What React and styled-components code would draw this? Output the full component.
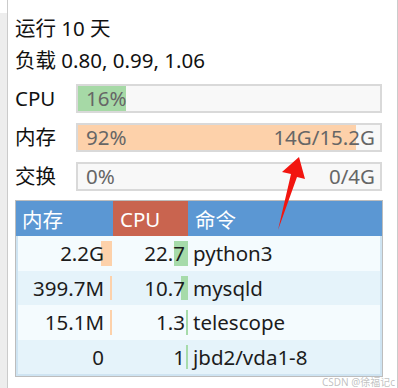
import styled, { createGlobalStyle } from 'styled-components';

const GlobalStyle = createGlobalStyle`
  html, body {
    margin: 0;
    padding: 0;
    background: #ffffff;
  }
  body {
    font-family: 'Noto Sans', 'Noto Sans CJK SC', sans-serif;
    -webkit-font-smoothing: antialiased;
  }
`;

const Frame = styled.div`
  position: relative;
  display: flex;
  width: 398px;
  height: 388px;
  overflow: hidden;
`;

const Gutter = styled.div`
  width: 7px;
  flex: none;
  background: linear-gradient(#ffffff 0, #ffffff 13px, #ededed 13px);
  border-right: 1px solid #cbcbcb;
`;

const Main = styled.div`
  flex: 1;
  border-right: 1px solid #cbcbcb;
  padding: 12px 14px 0 7px;
  font-size: 20.5px;
  color: #111;
`;

const Line = styled.div`
  height: 32px;
  line-height: 32px;
  white-space: nowrap;
`;

const Meters = styled.div`
  display: flex;
  flex-direction: column;
  gap: 10px;
  margin-top: 8px;
`;

const MeterRow = styled.div`
  display: grid;
  grid-template-columns: 61px 306px;
  align-items: center;
  height: 29px;
  line-height: 1;
`;

const Track = styled.div`
  position: relative;
  height: 29px;
  box-sizing: border-box;
  border: 2px solid #d9d9d9;
  background: #f8f8f8;
  display: flex;
  align-items: center;
  justify-content: space-between;
  padding: 0 5px 0 8px;
  color: #666;
  overflow: hidden;
`;

const Fill = styled.div`
  position: absolute;
  left: 0;
  top: 0;
  bottom: 0;
  background: ${({ kind }) => (kind === 'cpu' ? '#a6d9a6' : '#fdd1aa')};
`;

const TrackText = styled.span`
  position: relative;
`;

const Table = styled.div`
  margin-top: 9px;
  width: 368px;
  box-sizing: border-box;
  border: 1px solid #bdbdbd;
`;

const Head = styled.div`
  display: grid;
  grid-template-columns: 97px 75px 1fr;
  height: 35px;
  background: #5b97d3;
  color: #fff;
`;

const HeadCell = styled.div`
  display: flex;
  align-items: center;
  padding-left: ${({ pad }) => pad}px;
  background: ${({ active }) => (active ? '#c9644f' : 'transparent')};
`;

const Body = styled.div`
  border: 2px solid #cfe4f2;
  border-top: none;
`;

const Row = styled.div`
  display: grid;
  grid-template-columns: 95px 75px 1fr;
  height: 34.5px;
  background: ${({ odd }) => (odd ? '#e5f3fa' : '#f4fbfe')};
  color: #1c1c1c;
`;

const NumCell = styled.div`
  position: relative;
  display: flex;
  align-items: center;
  justify-content: flex-end;
  padding-right: ${({ pad }) => pad}px;
`;

const CellBar = styled.div`
  position: absolute;
  right: ${({ kind }) => (kind === 'cpu' ? 0 : 1)}px;
  top: 5px;
  bottom: 5px;
  background: ${({ kind }) => (kind === 'cpu' ? '#a6dbaa' : '#fdd1aa')};
`;

const CellText = styled.span`
  position: relative;
`;

const CmdCell = styled.div`
  display: flex;
  align-items: center;
  padding-left: 5px;
`;

const Arrow = styled.svg`
  position: absolute;
  left: 0;
  top: 0;
  pointer-events: none;
`;

const Watermark = styled.div`
  position: absolute;
  left: 322px;
  top: 374px;
  font-size: 10px;
  color: rgba(140, 140, 140, 0.55);
  white-space: nowrap;
`;

const meters = [
  { label: 'CPU', pct: 16, left: '16%', right: '', kind: 'cpu' },
  { label: '内存', pct: 92, left: '92%', right: '14G/15.2G', kind: 'mem' },
  { label: '交换', pct: 0, left: '0%', right: '0/4G', kind: 'mem' },
];

const procs = [
  { mem: '2.2G', memW: 11, cpu: '22.7', cpuW: 14, cmd: 'python3' },
  { mem: '399.7M', memW: 2, cpu: '10.7', cpuW: 7, cmd: 'mysqld' },
  { mem: '15.1M', memW: 2, cpu: '1.3', cpuW: 2, cmd: 'telescope' },
  { mem: '0', memW: 0, cpu: '1', cpuW: 2, cmd: 'jbd2/vda1-8' },
];

export default function App() {
  return (
    <Frame>
      <GlobalStyle />
      <Gutter />
      <Main>
        <Line>运行 10 天</Line>
        <Line>负载 0.80, 0.99, 1.06</Line>
        <Meters>
          {meters.map((m) => (
            <MeterRow key={m.label}>
              <span>{m.label}</span>
              <Track>
                <Fill kind={m.kind} style={{ width: `${m.pct}%` }} />
                <TrackText>{m.left}</TrackText>
                <TrackText>{m.right}</TrackText>
              </Track>
            </MeterRow>
          ))}
        </Meters>
        <Table>
          <Head>
            <HeadCell pad={6}>内存</HeadCell>
            <HeadCell pad={7} active>CPU</HeadCell>
            <HeadCell pad={7}>命令</HeadCell>
          </Head>
          <Body>
            {procs.map((p, i) => (
              <Row key={p.cmd} odd={i % 2 === 1}>
                <NumCell pad={9}>
                  {p.memW > 0 && <CellBar kind="mem" style={{ width: p.memW }} />}
                  <CellText>{p.mem}</CellText>
                </NumCell>
                <NumCell pad={3}>
                  <CellBar kind="cpu" style={{ width: p.cpuW }} />
                  <CellText>{p.cpu}</CellText>
                </NumCell>
                <CmdCell>{p.cmd}</CmdCell>
              </Row>
            ))}
          </Body>
        </Table>
      </Main>
      <Arrow width="398" height="388" viewBox="0 0 398 388">
        <polygon
          points="299,157 305,179 297,177 278,230 291,174 282,172"
          fill="#f2150f"
        />
      </Arrow>
      <Watermark>CSDN @徐福记c</Watermark>
    </Frame>
  );
}
